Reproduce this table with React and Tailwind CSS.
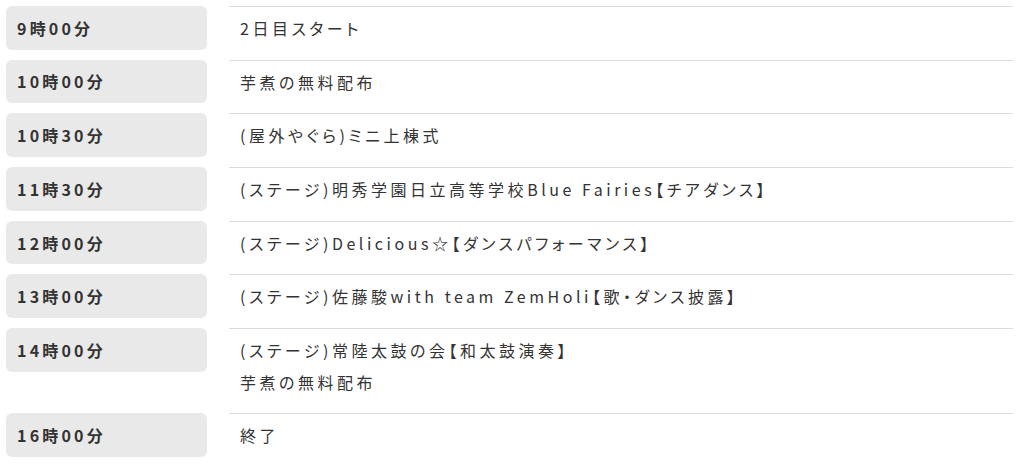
import React from "react";

const schedule = [
  { time: "9時00分", items: ["2日目スタート"] },
  { time: "10時00分", items: ["芋煮の無料配布"] },
  { time: "10時30分", items: ["(屋外やぐら)ミニ上棟式"] },
  { time: "11時30分", items: ["(ステージ)明秀学園日立高等学校Blue Fairies【チアダンス】"] },
  { time: "12時00分", items: ["(ステージ)Delicious☆【ダンスパフォーマンス】"] },
  { time: "13時00分", items: ["(ステージ)佐藤駿with team ZemHoli【歌・ダンス披露】"] },
  { time: "14時00分", items: ["(ステージ)常陸太鼓の会【和太鼓演奏】", "芋煮の無料配布"] },
  { time: "16時00分", items: ["終了"] },
];

export default function App() {
  return (
    <div
      className="w-[1024px] h-[464px] overflow-hidden bg-white px-[6px] pt-[6px] text-[#333] [font-feature-settings:'palt']"
      style={{ fontFamily: '"Noto Sans CJK JP", "Noto Sans", sans-serif' }}
    >
      {schedule.map((row, i) => (
        <div key={i} className="flex items-start gap-[22px] mb-[10.1px]">
          {/* Time label */}
          <div className="w-[201px] h-[43.6px] shrink-0 flex items-center px-[11px] bg-[#e9e9e9] rounded-[6px] text-[16px] font-bold tracking-[0.2em]">
            {row.time}
          </div>

          {/* Event */}
          <div className="flex-1 mr-[5px] border-t border-[#dcdcdc] pt-[6px] pb-[5px] px-[11px] text-[16px] leading-[31.5px] tracking-[0.22em]">
            {row.items.map((t, j) => (
              <div key={j}>{t}</div>
            ))}
          </div>
        </div>
      ))}
    </div>
  );
}
